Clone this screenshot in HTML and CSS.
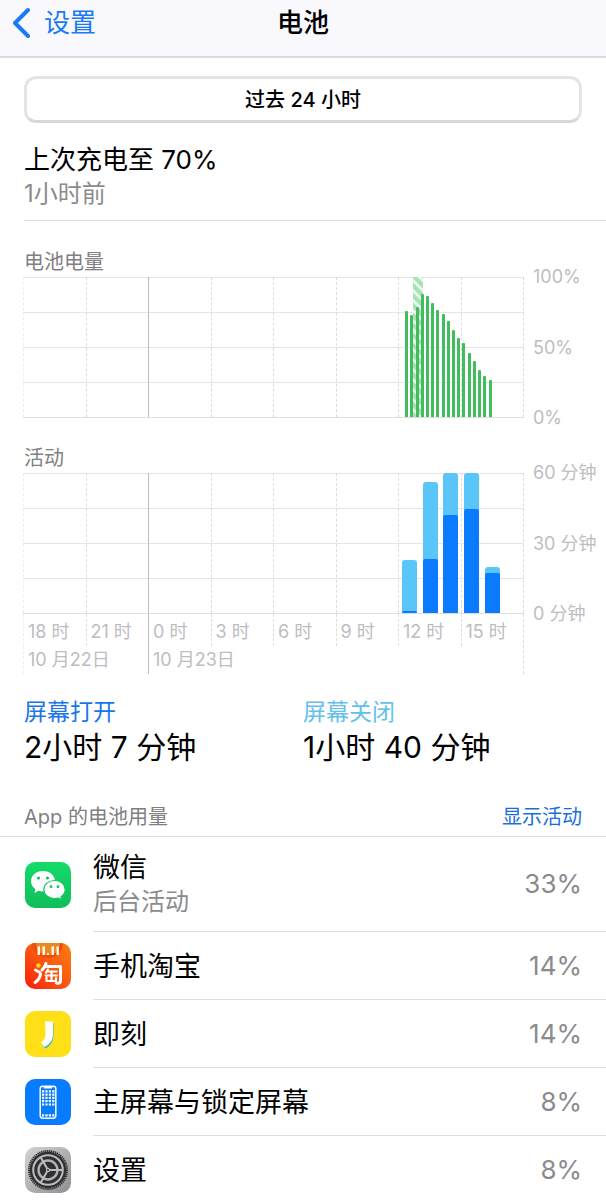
FILE: index.html
```html
<!DOCTYPE html>
<html lang="zh-CN">
<head>
<meta charset="utf-8">
<meta name="viewport" content="width=device-width, initial-scale=1">
<title>电池</title>
<link rel="stylesheet" href="styles.css">
</head>
<body>
<header class="navbar">
  <a class="back" href="#settings">
    <svg class="back-icon" viewBox="0 0 18 34" aria-hidden="true"><path d="M16 4 3 17l13 13" fill="none" stroke="currentColor" stroke-width="4" stroke-linecap="round" stroke-linejoin="round"/></svg>
    <span>设置</span>
  </a>
  <h1 class="nav-title">电池</h1>
</header>
<main>
  <div class="range"><button class="range-button" type="button">过去 24 小时</button></div>
  <section class="charge">
    <h2 class="charge-title">上次充电至 70%</h2>
    <p class="charge-time">1小时前</p>
  </section>

  <section class="chart battery">
    <h2 class="chart-title">电池电量</h2>
    <div class="chart-body">
      <div class="plot">
        <div class="columns"><i></i><i></i><i class="midnight"></i><i></i><i></i><i></i><i></i><i></i></div>
        <div class="charging" style="left:77.8%;width:2%"></div>
        <div class="bars quarter-hours">
          <b style="height:75.5%"></b><b style="height:72.7%"></b><b style="height:78.4%"></b><b style="height:87.6%"></b><b style="height:86.5%"></b><b style="height:81.5%"></b><b style="height:76.5%"></b><b style="height:73.4%"></b><b style="height:68.4%"></b><b style="height:62.5%"></b><b style="height:56.5%"></b><b style="height:52.7%"></b><b style="height:45.6%"></b><b style="height:39.7%"></b><b style="height:33.7%"></b><b style="height:29.5%"></b><b style="height:26.6%"></b>
        </div>
      </div>
      <div class="scale"><span>100%</span><span>50%</span><span>0%</span></div>
    </div>
  </section>

  <section class="chart activity">
    <h2 class="chart-title">活动</h2>
    <div class="chart-body">
      <div class="plot">
        <div class="columns"><i></i><i></i><i class="midnight"></i><i></i><i></i><i></i><i></i><i></i></div>
        <div class="bars hours">
          <b style="height:38.2%"><em style="height:4.5%"></em></b>
          <b style="height:93.3%"><em style="height:41%"></em></b>
          <b style="height:100%"><em style="height:69.7%"></em></b>
          <b style="height:100%"><em style="height:74%"></em></b>
          <b style="height:33%"><em style="height:86%"></em></b>
        </div>
      </div>
      <div class="scale"><span>60 分钟</span><span>30 分钟</span><span>0 分钟</span></div>
      <div class="times">
        <div class="hour-labels"><span>18 时</span><span>21 时</span><span class="midnight">0 时</span><span>3 时</span><span>6 时</span><span>9 时</span><span>12 时</span><span>15 时</span></div>
        <div class="date-labels"><span>10 月22日</span><span class="midnight">10 月23日</span></div>
      </div>
    </div>
  </section>

  <section class="totals">
    <div><h3 class="total-label on">屏幕打开</h3><p class="total-value">2小时 7 分钟</p></div>
    <div><h3 class="total-label off">屏幕关闭</h3><p class="total-value">1小时 40 分钟</p></div>
  </section>

  <section>
    <div class="list-head"><h2 class="list-title">App 的电池用量</h2><button class="toggle" type="button">显示活动</button></div>
    <ul class="apps">
      <li class="app tall">
        <svg class="app-icon" viewBox="0 0 46 46" aria-hidden="true">
          <defs><linearGradient id="wx" x2="0" y2="1"><stop stop-color="#12dc68"/><stop offset="1" stop-color="#10bd5b"/></linearGradient></defs>
          <rect width="46" height="46" rx="10" fill="url(#wx)"/>
          <path d="M18 9c-7 0-12 4.500-12 10.300 0 3.300 1.700 6 4.400 7.900l-1 3.700 4.200-2.100c1.400.4 2.800.6 4.400.6 7 0 12-4.400 12-10.100S25 9 18 9z" fill="#fff"/>
          <path d="M29.500 18.500c-6 0-10.700 4-10.700 9s4.700 9 10.700 9c1.300 0 2.600-.2 3.700-.5l3.700 1.900-.9-3.200c2.600-1.700 4.200-4.200 4.200-7.200 0-5-4.700-9-10.700-9z" fill="#fff" stroke="#11cb60" stroke-width="1.200"/>
          <g fill="#16bd5b"><circle cx="13.500" cy="16" r="1.600"/><circle cx="22.500" cy="16" r="1.600"/><circle cx="26" cy="24.700" r="1.400"/><circle cx="33" cy="24.700" r="1.400"/></g>
        </svg>
        <div class="app-row"><div><p class="app-name">微信</p><p class="app-note">后台活动</p></div><span class="percent">33%</span></div>
      </li>
      <li class="app">
        <svg class="app-icon" viewBox="0 0 46 46" aria-hidden="true">
          <defs>
            <linearGradient id="tb" x1="0" y1="1" x2="1" y2="0"><stop stop-color="#fa1d0c"/><stop offset=".5" stop-color="#fb5710"/><stop offset="1" stop-color="#f98012"/></linearGradient>
            <clipPath id="tbc"><rect width="46" height="46" rx="10"/></clipPath>
          </defs>
          <g clip-path="url(#tbc)">
            <rect width="46" height="46" fill="url(#tb)"/>
            <path d="M7 0h31c0 9-6 15-15.500 15S7 9 7 0z" fill="#ee4c12"/>
            <path d="M11 0h24c-1 8-5 12-12 12S12 8 11 0z" fill="#e98a20"/>
          </g>
          <g fill="#fff4dc"><path d="M12 4l3-1v9h-2.500V5zM17 4l3-1v9h-2.500V5zM26 4l3-1v9h-2.500V5zM31 4l3-1v9h-2.500V5z"/><rect x="22" y="10" width="2" height="2"/></g>
          <g fill="none" stroke="#fff" stroke-width="3" stroke-linecap="round" stroke-linejoin="round">
            <path d="M10.500 27l4 2.200M10 39.500c3-2 5-4.800 5.600-8.500"/>
            <path d="M21 20.500c-.8 3-2 5-4 6.500M20 23.500h15.500V38c0 2-1.500 2.500-4 2"/>
            <path d="M23 26.500l-2 3.200M22.500 28.500h9M20.500 32.500h11.500M26.500 28.500v9M21.500 34.500v3.500h9.500v-3" stroke-width="2.200"/>
          </g>
          <circle cx="13.500" cy="22.500" r="2.300" fill="#ffd51c"/>
        </svg>
        <div class="app-row"><p class="app-name">手机淘宝</p><span class="percent">14%</span></div>
      </li>
      <li class="app">
        <svg class="app-icon" viewBox="0 0 46 46" aria-hidden="true">
          <rect width="46" height="46" rx="10" fill="#ffdf18"/>
          <path d="M22.500 11.500l6 .5v12c0 7-3.500 11.500-8.500 13.500l-2.500-3.500c4-2.500 5.500-5.500 5.500-10z" fill="#35bfc4"/>
          <path d="M20 10.500h8v12.500c0 6-3 10.500-8.800 13L16 31c3.300-1.700 4.500-4.300 4.500-8z" fill="#fff"/>
        </svg>
        <div class="app-row"><p class="app-name">即刻</p><span class="percent">14%</span></div>
      </li>
      <li class="app">
        <svg class="app-icon" viewBox="0 0 46 46" aria-hidden="true">
          <rect width="46" height="46" rx="10" fill="#087cff"/>
          <rect x="15.200" y="7.200" width="15.600" height="32" rx="2.600" fill="none" stroke="#fff" stroke-width="1.500"/>
          <path d="M18.500 7h9v1.200c0 .8-.5 1.300-1.300 1.300h-6.400c-.8 0-1.300-.5-1.300-1.300z" fill="#fff"/>
          <path d="M17 12.300h12.500M17 15.600h12.500M17 18.900h12.500M17 22.200h12.500M17 25.500h12.500M17 36.300h12.500" fill="none" stroke="#fff" stroke-width="2.200" stroke-dasharray="2.200 1.200"/>
        </svg>
        <div class="app-row"><p class="app-name">主屏幕与锁定屏幕</p><span class="percent">8%</span></div>
      </li>
      <li class="app">
        <svg class="app-icon" viewBox="0 0 46 46" aria-hidden="true">
          <defs><linearGradient id="st" x1="0" y1="0" x2="1" y2="1"><stop stop-color="#d4d4d6"/><stop offset="1" stop-color="#8f8f93"/></linearGradient></defs>
          <rect width="46" height="46" rx="10" fill="url(#st)"/>
          <circle cx="23" cy="23" r="19" fill="none" stroke="#2f2f31" stroke-width="2" stroke-dasharray="1.300 .7"/>
          <circle cx="23" cy="23" r="18.200" fill="#2f2f31"/>
          <circle cx="23" cy="23" r="14.800" fill="none" stroke="#bcbcbf" stroke-width="2"/>
          <circle cx="23" cy="23" r="9.500" fill="none" stroke="#b2b2b5" stroke-width="2.400"/>
          <path d="M23 23h15M23 23L15.500 10M23 23l-7.500 13" stroke="#bcbcbf" stroke-width="2"/>
          <circle cx="23" cy="23" r="2.200" fill="#bcbcbf"/><circle cx="23" cy="23" r="1" fill="#303033"/>
        </svg>
        <div class="app-row"><p class="app-name">设置</p><span class="percent">8%</span></div>
      </li>
    </ul>
  </section>
</main>
</body>
</html>
```
FILE: styles.css
```css
* { box-sizing: border-box; }
html { overflow-x: hidden; }
body {
  margin: 0;
  background: #fff;
  color: #000;
  font-family: Inter, "Noto Sans CJK SC", sans-serif;
}
h1, h2, h3, p, ul { margin: 0; padding: 0; font-weight: 400; }
button { font-family: inherit; cursor: pointer; }

.navbar {
  display: grid;
  grid-template-columns: 1fr auto 1fr;
  align-items: center;
  height: 58px;
  padding: 0 12px 10px;
  background: #f9f9fd;
  border-bottom: 2px solid #dadadc;
}
.back {
  display: flex;
  align-items: center;
  gap: 14px;
  color: #1a79f5;
  font-size: 26px;
  line-height: 36px;
  text-decoration: none;
}
.back-icon { width: 18px; height: 34px; }
.nav-title { font-size: 26px; line-height: 36px; font-weight: 500; }

.range { padding: 18px 24px 0; }
.range-button {
  display: block;
  width: 100%;
  height: 47px;
  padding: 0;
  border: 3px solid #e4e4e5;
  border-bottom-color: #d8d8d9;
  border-radius: 12px;
  background: #fff;
  color: #000;
  font-size: 20px;
  line-height: 36px;
  font-weight: 500;
}

.charge {
  margin-left: 24px;
  padding: 19px 0 10px;
  border-bottom: 1px solid #dedee0;
}
.charge-title { font-size: 26px; line-height: 36px; }
.charge-time { color: #8b8b8e; font-size: 24px; line-height: 32px; }

.chart { padding: 25px 0 0 23px; }
.chart-title { padding-left: 1px; color: #808083; font-size: 20px; line-height: 30px; }
.battery .chart-title { padding-top: 1px; }
.chart-body { display: grid; grid-template-columns: 1fr 82px; }
.plot {
  position: relative;
  height: 141px;
  border-bottom: 1px solid #dedee0;
  background: linear-gradient(#e4e4e6 1px, transparent 1px) 0 0 / 100% 35px;
}
.columns {
  display: grid;
  grid-template-columns: repeat(8, 1fr);
  height: 100%;
  border-right: 1px dashed #dcdcde;
}
.columns i { border-left: 1px dashed #dcdcde; }
.columns i:first-child { border-left-color: #efeff0; }
.columns .midnight { border-left: 1px solid #bdbdc0; }
.bars { position: absolute; inset: 0; display: grid; align-items: end; justify-items: center; }
.quarter-hours { grid-template-columns: repeat(96, 1fr); }
.quarter-hours b { width: 3px; border-radius: 1px 1px 0 0; background: #41bd5d; }
.quarter-hours b:first-child { grid-column-start: 74; }
.charging {
  position: absolute;
  top: 0;
  bottom: 0;
  background: repeating-linear-gradient(45deg, #a9e2b5 0 4px, #e9f8ec 4px 7px);
}
.hours { grid-template-columns: repeat(24, 1fr); }
.hours b {
  display: flex;
  align-items: flex-end;
  width: 72%;
  border-radius: 3px 3px 0 0;
  background: #5ac5f9;
  overflow: hidden;
}
.hours b:first-child { grid-column-start: 19; }
.hours em { width: 100%; border-radius: 2px 2px 0 0; background: #0a7aff; }
.scale {
  display: flex;
  flex-direction: column;
  justify-content: space-between;
  margin: -12px 0;
  padding-left: 9px;
  color: #bdbdc0;
  font-size: 18px;
  line-height: 24px;
  white-space: nowrap;
}
.times {
  border-right: 1px dashed #dcdcde;
  color: #bdbdc0;
  font-size: 18px;
  line-height: 28px;
  white-space: nowrap;
}
.hour-labels { display: grid; grid-template-columns: repeat(8, 1fr); height: 32px; }
.hour-labels span { padding: 4px 0 0 4px; border-left: 1px dashed #dcdcde; }
.date-labels { display: grid; grid-template-columns: 1fr 3fr; height: 28px; }
.date-labels span { padding-left: 4px; border-left: 1px dashed #efeff0; }
.hour-labels span:first-child { border-left-color: #efeff0; }
.times .midnight { border-left: 1px solid #bdbdc0; }

.totals { display: grid; grid-template-columns: 1fr 1fr; padding: 22px 24px 0; }
.total-label { font-size: 23px; line-height: 32px; }
.on { color: #1a75ea; }
.off { color: #63bfeb; }
.total-value { font-size: 30px; line-height: 38px; }

.list-head {
  display: flex;
  justify-content: space-between;
  align-items: center;
  height: 71px;
  padding: 32px 24px 0;
  border-bottom: 1px solid #dedee0;
}
.list-title { color: #808083; font-size: 20px; line-height: 30px; }
.toggle { padding: 0; border: 0; background: none; color: #1a6fe0; font-size: 20px; line-height: 30px; }
.apps { list-style: none; }
.app { display: flex; align-items: center; gap: 22px; height: 68px; padding-left: 25px; }
.tall { height: 95px; }
.app-icon { flex: none; width: 46px; height: 46px; }
.app-row {
  display: flex;
  flex: 1;
  align-items: center;
  justify-content: space-between;
  height: 100%;
  padding-right: 24px;
  border-bottom: 1px solid #dedee0;
}
.app-name { font-size: 27px; line-height: 36px; }
.app-row > .app-name { padding-top: 3px; }
.app-note { color: #8b8b8e; font-size: 24px; line-height: 32px; }
.percent { color: #8b8b8e; font-size: 26px; line-height: 36px; }
```
